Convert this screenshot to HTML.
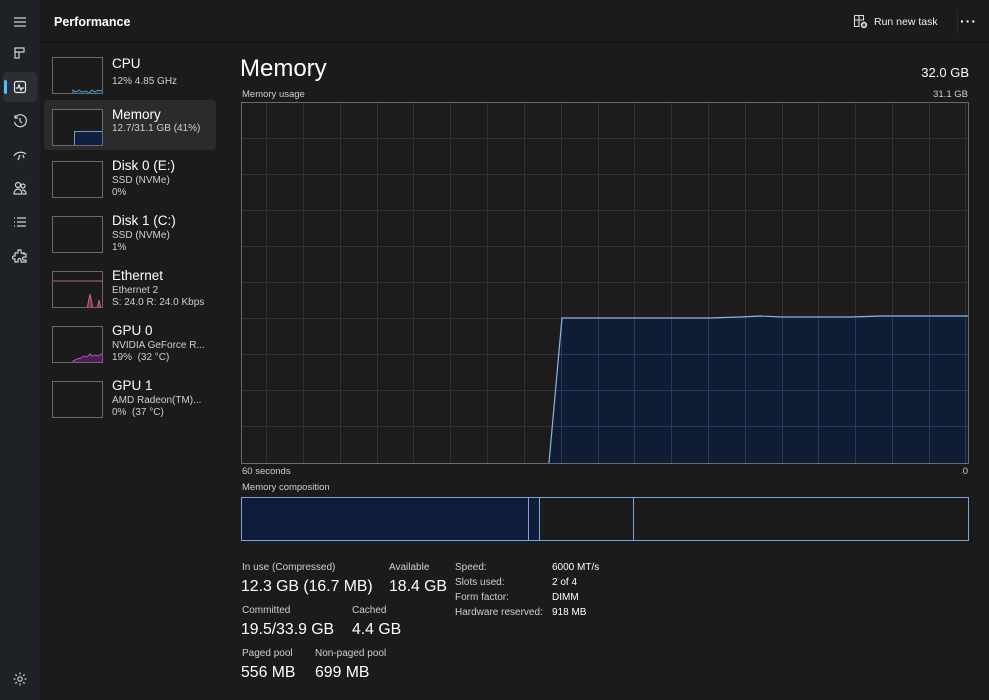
<!DOCTYPE html>
<html><head><meta charset="utf-8"><style>
*{margin:0;padding:0;box-sizing:border-box}
body{width:989px;height:700px;background:#1b1b1b;font-family:"Segoe UI","Liberation Sans",sans-serif;color:#fff;position:relative;overflow:hidden}
.rail{position:absolute;left:0;top:0;width:40px;height:700px;background:#1e2226}
.top{position:absolute;left:40px;top:0;right:0;height:43px;background:#1b1b1b;border-bottom:2px solid #141414}
.side{position:absolute;left:40px;top:45px;width:186px;bottom:0;background:#1b1b1b}
.abs{position:absolute}
.item{position:absolute;left:4px;width:172px;height:52px;border-radius:4px}
.thumb{position:absolute;left:8px;top:6px;width:51px;height:37px;border:1px solid #6a6a6a;background:#1b1b1b;overflow:hidden}
.t1{position:absolute;left:68px;top:3px;font-size:13.5px;color:#fff}
.t2{position:absolute;left:68px;font-size:10px;color:#cfcfcf}
.lbl{font-size:10px;color:#cfcfcf;position:absolute}
.big{font-size:15.8px;color:#fff;position:absolute}
.ic{position:absolute;left:12px;width:16px;height:16px}
</style></head><body>
<div class="rail">
 <svg class="ic" style="top:14px" viewBox="0 0 16 16" stroke="#cfd3d8" fill="none" stroke-width="1.2"><path d="M2 4h12M2 8h12M2 12h12"/></svg>
 <svg class="ic" style="top:45px" viewBox="0 0 16 16" stroke="#cfd3d8" fill="none" stroke-width="1.2"><path d="M3 3h9v4H7v6H3zM3 7h4M7 7v0"/></svg>
 <div class="abs" style="left:3px;top:72px;width:34px;height:30px;background:#2b2f33;border-radius:4px"></div>
 <div class="abs" style="left:4px;top:80px;width:3px;height:14px;background:#4cc2ff;border-radius:2px"></div>
 <svg class="ic" style="top:79px" viewBox="0 0 16 16" stroke="#e6e8ea" fill="none" stroke-width="1.2"><rect x="2.5" y="2.5" width="11" height="11" rx="2"/><path d="M4 9h2l1-3 2 5 1-2h2"/></svg>
 <svg class="ic" style="top:113px" viewBox="0 0 16 16" stroke="#cfd3d8" fill="none" stroke-width="1.2"><path d="M3 5A6 6 0 1 1 2.5 9M3 2v3h3M8 5v3l2 2"/></svg>
 <svg class="ic" style="top:147px" viewBox="0 0 16 16" stroke="#cfd3d8" fill="none" stroke-width="1.3"><path d="M2 9c2-4 8-5 12-2M8 8l-2 5M11 8l1 3"/></svg>
 <svg class="ic" style="top:180px" viewBox="0 0 16 16" stroke="#cfd3d8" fill="none" stroke-width="1.2"><circle cx="6" cy="5" r="2.5"/><circle cx="11" cy="6" r="2"/><path d="M2 14c0-3 2-5 4-5s4 2 4 5zM10 10c2 0 4 1 4 4h-3"/></svg>
 <svg class="ic" style="top:214px" viewBox="0 0 16 16" stroke="#cfd3d8" fill="none" stroke-width="1.2"><path d="M2 4h1M5 4h9M2 8h1M5 8h9M2 12h1M5 12h9"/></svg>
 <svg class="ic" style="top:248px" viewBox="0 0 16 16" stroke="#cfd3d8" fill="none" stroke-width="1.2"><path d="M6 2h3v2a1.5 1.5 0 0 0 3 0V6h2v3h-2a1.5 1.5 0 0 0 0 3h2v2H9v-2a1.5 1.5 0 0 0-3 0v2H3v-3h-1a1.5 1.5 0 0 1 0-3h1V5h3z"/></svg>
 <svg class="ic" style="top:671px" viewBox="0 0 16 16" stroke="#cfd3d8" fill="none" stroke-width="1.2"><circle cx="8" cy="8" r="2.2"/><path d="M8 1.5v2M8 12.5v2M1.5 8h2M12.5 8h2M3.4 3.4l1.4 1.4M11.2 11.2l1.4 1.4M3.4 12.6l1.4-1.4M11.2 4.8l1.4-1.4"/></svg>
</div>
<div class="top">
 <div class="abs" style="left:14px;top:15px;font-size:12.5px;font-weight:bold">Performance</div>
 <svg class="abs" style="left:813px;top:14px" width="15" height="15" viewBox="0 0 15 15" stroke="#ddd" fill="none" stroke-width="1.1"><path d="M1.5 1.5h9v5M1.5 1.5v11h5M1.5 6h9M6 1.5v11"/><circle cx="11" cy="11" r="3.2" fill="#ddd" stroke="none"/><path d="M11 9.3v3.4M9.3 11h3.4" stroke="#1b1b1b"/></svg>
 <div class="abs" style="left:834px;top:16px;font-size:10.5px;color:#eee">Run new task</div>
 <div class="abs" style="left:917px;top:9px;width:1px;height:24px;background:#2a2a2a"></div>
 <div class="abs" style="left:920px;top:13px;font-size:14px;font-weight:bold;letter-spacing:1px">···</div>
</div>
<div class="side">
 <div class="item" style="top:6px"><div class="thumb"><svg width="51" height="37"><path d="M20 37V32l3 2 3-2 3 2 4-1 3 2 3-3 3 2 3-2 3 1 3-2V37z" fill="#17303d" stroke="#3fa0c9" stroke-width="1"/></svg></div><div class="t1" style="top:5px">CPU</div><div class="t2" style="top:25px">12% 4.85 GHz</div></div>
 <div class="item" style="top:55px;background:#2b2b2b;height:50px"><div class="thumb" style="top:9px"><div class="abs" style="left:21px;top:21px;width:30px;height:16px;background:#102040;border:1px solid #6d97d6;border-right:0;border-bottom:0"></div></div><div class="t1" style="top:7px">Memory</div><div class="t2" style="top:23px">12.7/31.1 GB (41%)</div></div>
 <div class="item" style="top:110px"><div class="thumb"></div><div class="t1">Disk 0 (E:)</div><div class="t2" style="top:20px">SSD (NVMe)</div><div class="t2" style="top:32px">0%</div></div>
 <div class="item" style="top:165px"><div class="thumb"></div><div class="t1">Disk 1 (C:)</div><div class="t2" style="top:20px">SSD (NVMe)</div><div class="t2" style="top:32px">1%</div></div>
 <div class="item" style="top:220px"><div class="thumb"><svg width="51" height="37"><path d="M0 9H51" stroke="#c06080" stroke-width="1"/><path d="M34 37L37 22 40 37M44 37L46 28 48 37" fill="#7a3050" stroke="#d0608a"/></svg></div><div class="t1">Ethernet</div><div class="t2" style="top:20px">Ethernet 2</div><div class="t2" style="top:32px">S: 24.0 R: 24.0 Kbps</div></div>
 <div class="item" style="top:275px"><div class="thumb"><svg width="51" height="37"><path d="M20 37V34l4-2 4-1 3-2 3 1 3-3 2 2 3-1 3 1 3-2 3 1V37z" fill="#4a2050" stroke="#b050c0"/></svg></div><div class="t1">GPU 0</div><div class="t2" style="top:20px">NVIDIA GeForce R...</div><div class="t2" style="top:32px">19%&nbsp; (32 °C)</div></div>
 <div class="item" style="top:330px"><div class="thumb"></div><div class="t1">GPU 1</div><div class="t2" style="top:20px">AMD Radeon(TM)...</div><div class="t2" style="top:32px">0%&nbsp; (37 °C)</div></div>
</div>
<div class="abs" style="left:240px;top:55px;font-size:24px">Memory</div>
<div class="abs" style="right:20px;top:65px;font-size:13px">32.0 GB</div>
<div class="lbl" style="left:242px;top:89px;font-size:9.5px">Memory usage</div>
<div class="lbl" style="right:21px;top:89px;font-size:9.5px">31.1 GB</div>
<svg class="abs" style="left:241px;top:102px" width="728" height="363">
 <rect x="0.5" y="0.5" width="727" height="361" fill="#1c1c1c" stroke="#6a6a6a"/>
 <g stroke="#323232" stroke-width="1">
  <path d="M25.5 1V361M62.5 1V361M99.5 1V361M136.5 1V361M172.5 1V361M209.5 1V361M246.5 1V361M283.5 1V361M320.5 1V361M357.5 1V361M393.5 1V361M430.5 1V361M467.5 1V361M504.5 1V361M541.5 1V361M577.5 1V361M614.5 1V361M651.5 1V361M688.5 1V361M724.5 1V361"/>
  <path d="M1 36.5H727M1 72.5H727M1 108.5H727M1 144.5H727M1 180.5H727M1 216.5H727M1 252.5H727M1 288.5H727M1 324.5H727"/>
 </g>
 <path d="M308 361L321 216H468L500 215L520 214L540 215L610 215L640 214H727V361Z" fill="#0f1c36" opacity="0.92"/>
 <g stroke="#28395a" stroke-width="1"><path d="M320.5 216V361M357.5 216V361M393.5 216V361M430.5 216V361M467.5 216V361M504.5 216V361M541.5 216V361M577.5 216V361M614.5 216V361M651.5 216V361M688.5 216V361M724.5 216V361M312 252.5H727M312 288.5H727M312 324.5H727"/></g>
 <path d="M308 361L321 216H468L500 215L520 214L540 215L610 215L640 214H727" fill="none" stroke="#8eb3ea" stroke-width="1.2"/>
 <path d="M0 361.5H728" stroke="#6a6a6a"/>
</svg>
<div class="lbl" style="left:242px;top:466px;font-size:9.5px">60 seconds</div>
<div class="lbl" style="right:21px;top:466px;font-size:9.5px">0</div>
<div class="lbl" style="left:242px;top:482px;font-size:9.5px">Memory composition</div>
<div class="abs" style="left:241px;top:497px;width:728px;height:44px;border:1px solid #7ba3dc;background:#1b1b1b">
 <div class="abs" style="left:0;top:0;width:287px;height:42px;background:#0f1d3b;border-right:1px solid #7ba3dc"></div>
 <div class="abs" style="left:288px;top:0;width:10px;height:42px;background:#0f1d3b;border-right:1px solid #7ba3dc"></div>
 <div class="abs" style="left:391px;top:0;width:1px;height:42px;background:#7ba3dc"></div>
</div>
<div class="lbl" style="left:242px;top:562px">In use (Compressed)</div>
<div class="big" style="left:241px;top:578px">12.3 GB (16.7 MB)</div>
<div class="lbl" style="left:389px;top:562px">Available</div>
<div class="big" style="left:389px;top:578px">18.4 GB</div>
<div class="lbl" style="left:242px;top:605px">Committed</div>
<div class="big" style="left:241px;top:621px">19.5/33.9 GB</div>
<div class="lbl" style="left:352px;top:605px">Cached</div>
<div class="big" style="left:352px;top:621px">4.4 GB</div>
<div class="lbl" style="left:242px;top:648px">Paged pool</div>
<div class="big" style="left:241px;top:664px">556 MB</div>
<div class="lbl" style="left:315px;top:648px">Non-paged pool</div>
<div class="big" style="left:315px;top:664px">699 MB</div>
<div class="lbl" style="left:455px;top:562px">Speed:</div><div class="lbl" style="left:552px;top:562px;color:#fff">6000 MT/s</div>
<div class="lbl" style="left:455px;top:577px">Slots used:</div><div class="lbl" style="left:552px;top:577px;color:#fff">2 of 4</div>
<div class="lbl" style="left:455px;top:592px">Form factor:</div><div class="lbl" style="left:552px;top:592px;color:#fff">DIMM</div>
<div class="lbl" style="left:455px;top:607px">Hardware reserved:</div><div class="lbl" style="left:552px;top:607px;color:#fff">918 MB</div>
</body></html>
